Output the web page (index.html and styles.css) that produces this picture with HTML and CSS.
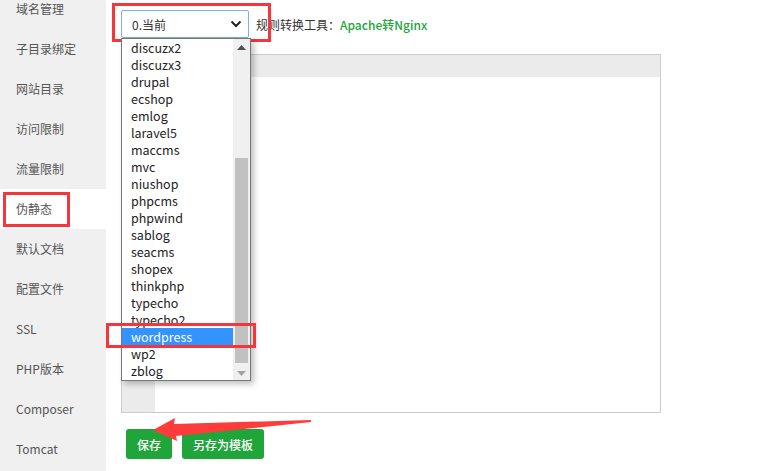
FILE: index.html
```html
<!DOCTYPE html>
<html>
<head>
<meta charset="utf-8">
<link rel="stylesheet" href="styles.css">
</head>
<body>
<div class="page">
  <aside class="sidebar">
    <div class="nav-list">
      <div class="nav-item">域名管理</div>
      <div class="nav-item">子目录绑定</div>
      <div class="nav-item">网站目录</div>
      <div class="nav-item">访问限制</div>
      <div class="nav-item">流量限制</div>
      <div class="nav-item active">伪静态<span class="mark mark-nav"></span></div>
      <div class="nav-item">默认文档</div>
      <div class="nav-item">配置文件</div>
      <div class="nav-item">SSL</div>
      <div class="nav-item">PHP版本</div>
      <div class="nav-item">Composer</div>
      <div class="nav-item">Tomcat</div>
    </div>
  </aside>
  <main class="content">
    <div class="toolbar">
      <div class="select-wrap">
        <div class="select">
          <span>0.当前</span>
          <svg class="chev" width="12" height="8" viewBox="0 0 12 8"><path d="M1.5 1.5 L6 6 L10.5 1.5" fill="none" stroke="#222" stroke-width="2"/></svg>
        </div>
        <span class="mark mark-select"></span>
        <div class="listbox">
          <div class="options">
            <div class="opt">discuzx2</div>
            <div class="opt">discuzx3</div>
            <div class="opt">drupal</div>
            <div class="opt">ecshop</div>
            <div class="opt">emlog</div>
            <div class="opt">laravel5</div>
            <div class="opt">maccms</div>
            <div class="opt">mvc</div>
            <div class="opt">niushop</div>
            <div class="opt">phpcms</div>
            <div class="opt">phpwind</div>
            <div class="opt">sablog</div>
            <div class="opt">seacms</div>
            <div class="opt">shopex</div>
            <div class="opt">thinkphp</div>
            <div class="opt">typecho</div>
            <div class="opt">typecho2</div>
            <div class="opt selected">wordpress<span class="mark mark-opt"></span></div>
            <div class="opt">wp2</div>
            <div class="opt">zblog</div>
          </div>
          <div class="scrollbar">
            <svg class="arrow-up" width="9" height="5" viewBox="0 0 9 5"><path d="M0 5 L4.5 0 L9 5 Z" fill="#505050"/></svg>
            <div class="track"><div class="thumb"></div></div>
            <svg class="arrow-down" width="9" height="5" viewBox="0 0 9 5"><path d="M0 0 L4.5 5 L9 0 Z" fill="#a3a3a3"/></svg>
          </div>
        </div>
      </div>
      <span class="label">规则转换工具：<a class="link">Apache转Nginx</a></span>
    </div>
    <div class="editor">
      <div class="gutter"></div>
      <div class="code">
        <div class="active-line"></div>
      </div>
    </div>
    <div class="actions">
      <button class="btn">保存</button>
      <button class="btn">另存为模板</button>
      <svg class="pointer" width="170" height="30" viewBox="0 0 170 30"><polygon points="1,15 23,3 22,9 159,5 159,7 24,21 25,26" fill="#ff3b3b"/></svg>
    </div>
  </main>
</div>
</body>
</html>
```

FILE: styles.css
```css
* { box-sizing: border-box; }
html, body { margin: 0; padding: 0; background: #fff; }
body {
  font-family: "Microsoft YaHei", "Noto Sans CJK SC", "Noto Sans", sans-serif;
  font-size: 12px;
  color: #333;
  width: 772px;
  height: 471px;
  overflow: hidden;
}
.page { display: flex; height: 471px; }
.sidebar {
  width: 106px;
  flex: none;
  background: #f0f0f0;
  overflow: hidden;
}
.nav-list { margin-top: -11px; }
.nav-item {
  position: relative;
  height: 40px;
  line-height: 40px;
  padding-left: 16px;
  color: #555;
  font-size: 12px;
}
.nav-item.active { background: #fff; }
.mark {
  position: absolute;
  border: 3px solid #f5363a;
  pointer-events: none;
}
.mark-nav { left: 3px; top: 3px; width: 67px; height: 35px; }
.content {
  flex: 1;
  padding: 10px 0 0 15px;
  position: relative;
}
.toolbar { display: flex; align-items: center; height: 28px; }
.select-wrap { position: relative; width: 128px; height: 28px; }
.select {
  height: 28px;
  border: 1px solid #7fb0e2;
  border-radius: 2px;
  background: #fff;
  display: flex;
  align-items: center;
  justify-content: space-between;
  padding: 0 6px 0 10px;
  color: #333;
  font-size: 12px;
}
.mark-select { left: -9px; top: -7px; width: 159px; height: 39px; }
.label { margin-left: 7px; color: #333; font-size: 12px; }
.link { color: #20a53a; font-weight: 500; }
.listbox {
  position: absolute;
  left: 0;
  top: 28px;
  width: 130px;
  height: 343px;
  background: #fff;
  border: 1px solid #777;
  box-shadow: 3px 3px 6px rgba(0,0,0,0.25);
  display: flex;
  z-index: 5;
}
.options { flex: 1; }
.opt {
  position: relative;
  height: 17px;
  line-height: 17px;
  padding-left: 9px;
  color: #222;
  font-size: 12.5px;
}
.opt.selected { background: #3393ff; color: #fff; }
.mark-opt { left: -16px; top: -5px; width: 150px; height: 25px; }
.scrollbar {
  width: 17px;
  background: #f0f0f0;
  display: flex;
  flex-direction: column;
  align-items: center;
}
.arrow-up { margin-top: 6px; flex: none; }
.track { flex: 1; width: 100%; padding: 0 2px; display: flex; flex-direction: column; }
.thumb { margin-top: 108px; height: 205px; background: #c1c1c1; }
.arrow-down { margin: 0 0 4px; flex: none; }
.editor {
  margin-top: 16px;
  width: 540px;
  height: 359px;
  border: 1px solid #ccc;
  display: flex;
}
.gutter { width: 33px; background: #ebebeb; }
.code { flex: 1; }
.active-line { height: 22px; background: #ebebeb; }
.actions {
  position: relative;
  margin-top: 16px;
  display: flex;
  gap: 10px;
  padding-left: 5px;
}
.btn {
  height: 30px;
  border: none;
  border-radius: 3px;
  background: #20a53a;
  color: #fff;
  font-family: inherit;
  font-size: 12px;
  font-weight: 500;
  padding: 0 11px;
}
.pointer { position: absolute; left: 31px; top: -14px; }
```
